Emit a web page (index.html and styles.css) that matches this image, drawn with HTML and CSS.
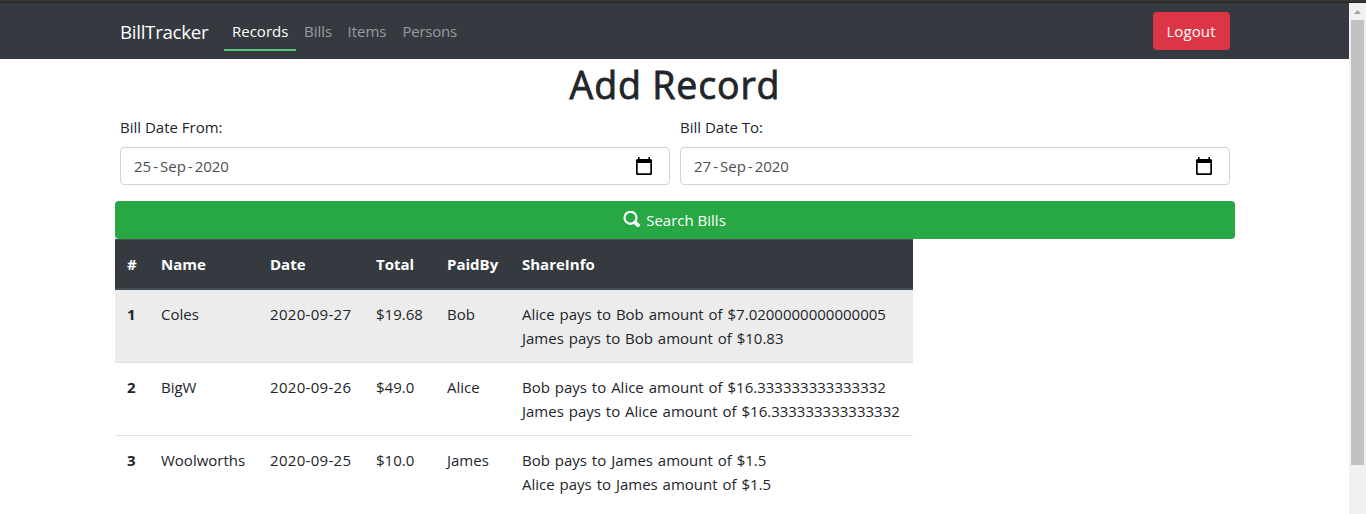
FILE: index.html
```html
<!DOCTYPE html>
<html lang="en">
<head>
<meta charset="utf-8">
<title>BillTracker</title>
<link rel="stylesheet" href="styles.css">
</head>
<body>
<div class="window-edge"></div>
<div class="viewport">
  <div class="page">
    <nav class="navbar">
      <a class="brand">BillTracker</a>
      <div class="links">
        <a class="link active"><span class="t-records">Records</span></a>
        <a class="link"><span class="t-bills">Bills</span></a>
        <a class="link"><span class="t-items">Items</span></a>
        <a class="link"><span class="t-persons">Persons</span></a>
      </div>
      <button class="btn logout">Logout</button>
    </nav>
    <main class="content">
      <h1 class="title">Add Record</h1>
      <div class="form-row">
        <div class="field">
          <label class="label">Bill Date From:</label>
          <div class="control">
            <span class="date"><span>25</span><span>-</span><span>Sep</span><span>-</span><span>2020</span></span>
            <svg class="calendar" viewBox="0 0 16 18"><path d="M2 0h1.600v2h8.800V0H14v2h.5A1.500 1.500 0 0 1 16 3.500v13a1.500 1.500 0 0 1-1.500 1.500h-13A1.500 1.500 0 0 1 0 16.500v-13a1.500 1.500 0 0 1 1.500-1.500H2zM1.700 6v10.300h12.600V6z" fill="#000" fill-rule="evenodd"/></svg>
          </div>
        </div>
        <div class="field">
          <label class="label">Bill Date To:</label>
          <div class="control">
            <span class="date"><span>27</span><span>-</span><span>Sep</span><span>-</span><span>2020</span></span>
            <svg class="calendar" viewBox="0 0 16 18"><path d="M2 0h1.600v2h8.800V0H14v2h.5A1.500 1.500 0 0 1 16 3.500v13a1.500 1.500 0 0 1-1.500 1.500h-13A1.500 1.500 0 0 1 0 16.500v-13a1.500 1.500 0 0 1 1.500-1.500H2zM1.700 6v10.300h12.600V6z" fill="#000" fill-rule="evenodd"/></svg>
          </div>
        </div>
      </div>
      <button class="btn search"><svg class="glass" viewBox="0 0 17 17"><circle cx="7.500" cy="6.800" r="6" fill="none" stroke="#fff" stroke-width="2.200"/><path d="M12 11.400l2.900 2.700" stroke="#fff" stroke-width="3.800" stroke-linecap="round"/></svg><span>Search Bills</span></button>
      <table class="table">
        <colgroup><col class="c-num"><col class="c-name"><col class="c-date"><col class="c-total"><col class="c-paid"><col class="c-share"></colgroup>
        <thead><tr><th>#</th><th>Name</th><th>Date</th><th>Total</th><th>PaidBy</th><th>ShareInfo</th></tr></thead>
        <tbody>
          <tr class="hovered"><th>1</th><td>Coles</td><td class="day">2020-09-27</td><td>$19.68</td><td>Bob</td><td>Alice pays to Bob amount of $7.0200000000000005<br>James pays to Bob amount of $10.83</td></tr>
          <tr><th>2</th><td>BigW</td><td class="day">2020-09-26</td><td>$49.0</td><td>Alice</td><td>Bob pays to Alice amount of $16.333333333333332<br>James pays to Alice amount of $16.333333333333332</td></tr>
          <tr><th>3</th><td>Woolworths</td><td class="day">2020-09-25</td><td>$10.0</td><td>James</td><td>Bob pays to James amount of $1.5<br>Alice pays to James amount of $1.5</td></tr>
        </tbody>
      </table>
    </main>
  </div>
  <div class="scrollbar">
    <svg class="arrow" viewBox="0 0 7 4"><path d="M0 4L3.500 0L7 4z" fill="#a3a3a3"/></svg>
    <div class="thumb"></div>
  </div>
</div>
</body>
</html>
```
FILE: styles.css
```css
* { box-sizing: border-box; }
body {
  margin: 0;
  height: 514px;
  overflow: hidden;
  background: #fff;
  color: #212529;
  font: 15px/24px "Open Sans", "Noto Sans", sans-serif;
}
.window-edge { height: 3px; background: #353535; border-bottom: 1px solid #242424; }
.viewport { display: flex; height: 511px; }
.page { flex: 1; overflow: hidden; }
.navbar {
  display: flex;
  align-items: center;
  height: 56px;
  padding: 0 119px 0 120px;
  background: #343a40;
}
.brand { width: 104px; padding-top: 2px; color: #fff; font-size: 18.75px; line-height: 30px; letter-spacing: -0.3px; }
.links { display: flex; }
.link {
  height: 40px;
  padding: 8px 8px 0;
  border-bottom: 2px solid transparent;
  color: #999c9f;
  white-space: nowrap;
}
.link span { display: block; }
.active { color: #fff; border-bottom-color: #55c57a; }
.t-records { width: 56px; }
.t-bills { width: 27.500px; }
.t-items { width: 39px; }
.t-persons { width: 55px; letter-spacing: -0.25px; }
.btn {
  display: flex;
  align-items: center;
  justify-content: center;
  height: 38px;
  padding: 0;
  border: 0;
  border-radius: 4px;
  color: #fff;
  font: inherit;
}
.logout { width: 77px; margin-left: auto; padding-right: 1px; letter-spacing: 0.1px; background: #dc3545; }
.content { padding: 2px 114px 0 115px; }
.title {
  margin: 0 0 7px;
  text-align: center;
  font-size: 37.500px;
  line-height: 48px;
  font-weight: 400;
  letter-spacing: 0.850px;
  -webkit-text-stroke: 0.800px #212529;
}
.form-row { display: flex; gap: 10px; padding: 0 5px; margin-bottom: 16px; }
.field { flex: 1; margin-top: -1px; }
.label { display: block; margin-bottom: 8px; }
.control {
  display: flex;
  align-items: center;
  justify-content: space-between;
  height: 38px;
  padding: 0 17px 0 12px;
  border: 1px solid #ced4da;
  border-radius: 4px;
  color: #495057;
}
.date { display: flex; }
.date span { padding: 0 1px; }
.calendar { width: 16px; height: 18px; }
.search { width: 100%; gap: 6px; padding-right: 1px; background: #28a745; }
.glass { width: 17px; height: 17px; margin-top: -2px; }
.table { width: 798px; table-layout: fixed; border-collapse: separate; border-spacing: 0; }
.table th, .table td {
  padding: 12px 0 12px 12px;
  text-align: left;
  vertical-align: top;
  white-space: nowrap;
  border-top: 1px solid #dee2e6;
}
.table td { word-spacing: 1px; }
.table .day { letter-spacing: 0.300px; }
.table th { font-weight: 700; }
.table thead th {
  background: #343a40;
  color: #fff;
  border-top: 1px solid #454d55;
  border-bottom: 2px solid #454d55;
}
.hovered th, .hovered td { background: #ececec; }
.table .hovered th, .table .hovered td { border-top: 0; }
.c-num { width: 34px; }
.c-name { width: 109px; }
.c-date { width: 106px; }
.c-total { width: 71px; }
.c-paid { width: 75px; }
.c-share { width: 403px; }
.scrollbar {
  display: flex;
  flex-direction: column;
  align-items: center;
  width: 17px;
  padding: 7px 2px 0;
  background: #f1f1f1;
}
.arrow { width: 7px; height: 4px; margin-bottom: 6px; }
.thumb { width: 13px; height: 445px; background: #c1c1c1; }
```
